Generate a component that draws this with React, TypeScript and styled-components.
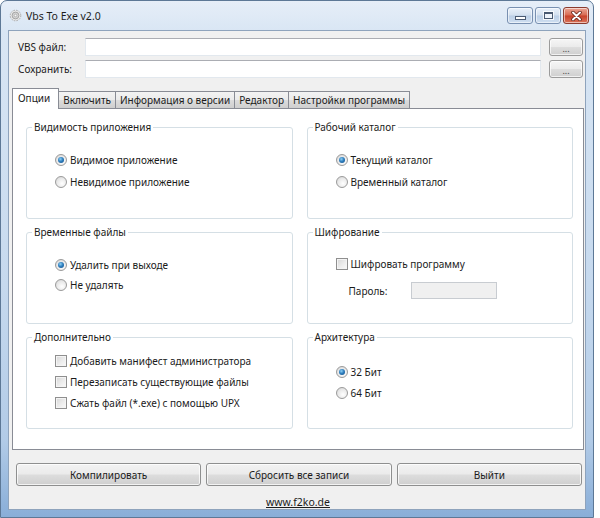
import React, { FC } from 'react'
import styled, { createGlobalStyle, css } from 'styled-components'

const GlobalStyle = createGlobalStyle`
  html, body {
    margin: 0;
    padding: 0;
    background: #ffffff;
  }

  body {
    font-family: 'Noto Sans', 'Open Sans', sans-serif;
    font-size: 10px;
    color: #1b1b1b;
  }
`

const Window = styled.div`
  box-sizing: border-box;
  width: 594px;
  height: 518px;
  padding: 0 7px 7px 7px;
  display: flex;
  flex-direction: column;
  border: 1px solid #5d7896;
  border-radius: 7px 7px 0 0;
  background: linear-gradient(180deg, #e6eef8 0%, #d9e6f4 30px, #c6d9ee 55%, #b2cbe7 85%, #89aed8 100%);
`

const TitleBar = styled.div`
  height: 29px;
  display: flex;
  align-items: center;
  flex-shrink: 0;
`

const AppIcon = styled.svg`
  width: 13px;
  height: 13px;
  margin: 0 4px 0 1px;
`

const Title = styled.span`
  flex: 1;
  font-size: 10.5px;
  color: #1e1e1e;
  padding-top: 1px;
`

const CaptionButtons = styled.div`
  display: flex;
  gap: 2px;
  align-self: flex-start;
  margin-top: 6px;
  margin-right: -3px;
`

const CaptionButton = styled.div<{ $close?: boolean }>`
  box-sizing: border-box;
  width: 26px;
  height: 17px;
  border: 1px solid #7890b1;
  border-radius: 3px;
  display: flex;
  align-items: center;
  justify-content: center;
  box-shadow: inset 0 0 0 1px rgba(255, 255, 255, 0.55);
  background: linear-gradient(180deg, #eaf1fa 0%, #d3e0ef 48%, #bccfe6 52%, #cfdff1 100%);

  ${({ $close }) =>
    $close &&
    css`
      border-color: #8a3b2f;
      background: linear-gradient(180deg, #eba796 0%, #d96a52 48%, #c8412a 52%, #d9735a 100%);
    `}
`

const MinGlyph = styled.span`
  width: 9px;
  height: 2px;
  margin-top: 5px;
  background: #ffffff;
  border: 1px solid #4a5a72;
`

const MaxGlyph = styled.span`
  box-sizing: border-box;
  width: 9px;
  height: 7px;
  border: 1px solid #4a5a72;
  border-top-width: 2px;
  background: #eef3fa;
  outline: 1px solid rgba(255, 255, 255, 0.8);
`

const Client = styled.div`
  flex: 1;
  display: flex;
  flex-direction: column;
  padding: 7px 1px 0 3px;
  background: #f0f0f0;
  border: 1px solid #8ea3bc;
`

const FileRows = styled.div`
  display: flex;
  flex-direction: column;
  gap: 4px;
  padding: 0 1px 0 6px;
`

const FileRow = styled.div`
  display: flex;
  align-items: center;
  height: 18px;
`

const FieldLabel = styled.span`
  width: 67px;
  flex-shrink: 0;
`

const TextBox = styled.div<{ $disabled?: boolean }>`
  box-sizing: border-box;
  flex: 1;
  height: 18px;
  border: 1px solid #e2e8ee;
  border-top-color: #abadb3;
  background: #ffffff;

  ${({ $disabled }) =>
    $disabled &&
    css`
      flex: none;
      width: 86px;
      height: 17px;
      background: #f0f0f0;
      border-color: #c8ccd1;
    `}
`

const BrowseButton = styled.div`
  box-sizing: border-box;
  width: 34px;
  height: 18px;
  margin-left: 8px;
  border: 1px solid #9b9b9b;
  border-radius: 3px;
  background: linear-gradient(180deg, #f6f6f6 0%, #ebebeb 48%, #dddddd 52%, #cfcfcf 100%);
  box-shadow: inset 0 0 0 1px rgba(255, 255, 255, 0.7);
  display: flex;
  align-items: flex-end;
  justify-content: center;
  font-size: 9px;
  line-height: 12px;
  color: #444;
`

const Tabs = styled.div`
  margin-top: 11px;
  display: flex;
  flex-direction: column;
`

const TabStrip = styled.div`
  height: 19px;
  display: flex;
  align-items: flex-end;
  position: relative;
  z-index: 1;
`

const Tab = styled.div<{ $active?: boolean }>`
  box-sizing: border-box;
  height: 17px;
  padding: 0 4px;
  display: flex;
  align-items: center;
  border: 1px solid #898c95;
  border-bottom: none;
  margin-right: -1px;
  background: linear-gradient(180deg, #f3f3f3 0%, #ebebeb 50%, #dddddd 50%, #cfcfcf 100%);
  white-space: nowrap;

  ${({ $active }) =>
    $active &&
    css`
      height: 21px;
      margin-bottom: -1px;
      padding: 0 8px 3px 5px;
      background: #ffffff;
    `}
`

const TabPage = styled.div`
  box-sizing: border-box;
  height: 342px;
  padding: 10px 10px 0 13px;
  border: 1px solid #898c95;
  background: #ffffff;
  display: grid;
  grid-template-columns: 1fr 1fr;
  grid-auto-rows: 100px;
  column-gap: 14px;
  row-gap: 5px;
`

const Group = styled.fieldset`
  margin: 0;
  padding: 0;
  min-inline-size: 0;
  border: 1px solid #d5dfe5;
  border-radius: 3px;
`

const Legend = styled.legend`
  margin-left: 5px;
  padding: 0 2px;
  line-height: 16px;
`

const Options = styled.div<{ $top: number; $row: number }>`
  display: flex;
  flex-direction: column;
  padding: ${({ $top }) => $top}px 0 0 28px;

  & > * {
    height: ${({ $row }) => $row}px;
  }
`

const Option = styled.label`
  display: flex;
  align-items: center;
  gap: 3px;
`

const RadioMark = styled.span<{ $checked?: boolean }>`
  box-sizing: border-box;
  width: 12px;
  height: 12px;
  border-radius: 50%;
  border: 1px solid #9a9a9a;
  background: radial-gradient(circle at 60% 65%, #ffffff 0%, #e9e9e9 55%, #cfcfcf 100%);
  display: flex;
  align-items: center;
  justify-content: center;

  ${({ $checked }) =>
    $checked &&
    css`
      &::after {
        content: '';
        width: 6px;
        height: 6px;
        border-radius: 50%;
        background: radial-gradient(circle at 40% 35%, #8ed0f5 0%, #2f7fbe 45%, #0f4a85 100%);
      }
    `}
`

const CheckMark = styled.span`
  box-sizing: border-box;
  width: 12px;
  height: 12px;
  border: 1px solid #8f8f8f;
  background: linear-gradient(135deg, #d6d6d6 0%, #ececec 55%, #fafafa 100%);
  box-shadow: inset 0 0 0 1px #f4f4f4;
`

const PasswordRow = styled.div`
  display: flex;
  align-items: center;
  margin-top: 8px;
  padding-left: 41px;
`

const PasswordLabel = styled.span`
  width: 62px;
`

const ActionBar = styled.div`
  margin-top: 13px;
  padding: 0 2px 0 4px;
  display: grid;
  grid-template-columns: repeat(3, 1fr);
  gap: 5px;
`

const ActionButton = styled.div`
  box-sizing: border-box;
  height: 23px;
  border: 1px solid #8e8f8f;
  border-radius: 3px;
  background: linear-gradient(180deg, #f2f2f2 0%, #ebebeb 48%, #dddddd 52%, #cfcfcf 100%);
  box-shadow: inset 0 0 0 1px rgba(255, 255, 255, 0.75);
  display: flex;
  align-items: center;
  justify-content: center;
`

const SiteLink = styled.a`
  align-self: center;
  margin-top: 9px;
  font-size: 10.5px;
  color: #1b1b1b;
  text-decoration: underline;
`

interface ChoiceProps {
  checked?: boolean
}

const Radio: FC<React.PropsWithChildren<ChoiceProps>> = ({ checked, children }) => (
  <Option>
    <RadioMark $checked={checked} />
    {children}
  </Option>
)

const Check: FC<React.PropsWithChildren> = ({ children }) => (
  <Option>
    <CheckMark />
    {children}
  </Option>
)

const tabs = ['Опции', 'Включить', 'Информация о версии', 'Редактор', 'Настройки программы']

const App: FC = () => (
  <>
    <GlobalStyle />
    <Window>
      <TitleBar>
        <AppIcon viewBox="0 0 16 16">
          <circle cx="8" cy="8" r="6.5" fill="#e8e8e8" stroke="#9a9a9a" strokeWidth="1" strokeDasharray="2 1.4" />
          <circle cx="8" cy="8" r="4.2" fill="#d4d4d4" stroke="#8a8a8a" strokeWidth="0.8" />
          <circle cx="8" cy="8" r="1.6" fill="#f7f7f7" stroke="#8a8a8a" strokeWidth="0.6" />
        </AppIcon>
        <Title>Vbs To Exe v2.0</Title>
        <CaptionButtons>
          <CaptionButton>
            <MinGlyph />
          </CaptionButton>
          <CaptionButton>
            <MaxGlyph />
          </CaptionButton>
          <CaptionButton $close>
            <svg width="11" height="10" viewBox="0 0 11 10">
              <path d="M2 1.5 L9 8.5 M9 1.5 L2 8.5" stroke="#5a1a10" strokeWidth="3.4" strokeLinecap="round" />
              <path d="M2 1.5 L9 8.5 M9 1.5 L2 8.5" stroke="#ffffff" strokeWidth="2" strokeLinecap="round" />
            </svg>
          </CaptionButton>
        </CaptionButtons>
      </TitleBar>

      <Client>
        <FileRows>
          <FileRow>
            <FieldLabel>VBS файл:</FieldLabel>
            <TextBox />
            <BrowseButton>...</BrowseButton>
          </FileRow>
          <FileRow>
            <FieldLabel>Сохранить:</FieldLabel>
            <TextBox />
            <BrowseButton>...</BrowseButton>
          </FileRow>
        </FileRows>

        <Tabs>
          <TabStrip>
            {tabs.map((t, i) => (
              <Tab key={t} $active={i === 0}>
                {t}
              </Tab>
            ))}
          </TabStrip>
          <TabPage>
            <Group>
              <Legend>Видимость приложения</Legend>
              <Options $top={14} $row={22}>
                <Radio checked>Видимое приложение</Radio>
                <Radio>Невидимое приложение</Radio>
              </Options>
            </Group>
            <Group>
              <Legend>Рабочий каталог</Legend>
              <Options $top={14} $row={22}>
                <Radio checked>Текущий каталог</Radio>
                <Radio>Временный каталог</Radio>
              </Options>
            </Group>
            <Group>
              <Legend>Временные файлы</Legend>
              <Options $top={15} $row={20}>
                <Radio checked>Удалить при выходе</Radio>
                <Radio>Не удалять</Radio>
              </Options>
            </Group>
            <Group>
              <Legend>Шифрование</Legend>
              <Options $top={14} $row={20}>
                <Check>Шифровать программу</Check>
              </Options>
              <PasswordRow>
                <PasswordLabel>Пароль:</PasswordLabel>
                <TextBox $disabled />
              </PasswordRow>
            </Group>
            <Group>
              <Legend>Дополнительно</Legend>
              <Options $top={5} $row={21}>
                <Check>Добавить манифест администратора</Check>
                <Check>Перезаписать существующие файлы</Check>
                <Check>Сжать файл (*.exe) с помощью UPX</Check>
              </Options>
            </Group>
            <Group>
              <Legend>Архитектура</Legend>
              <Options $top={16} $row={21}>
                <Radio checked>32 Бит</Radio>
                <Radio>64 Бит</Radio>
              </Options>
            </Group>
          </TabPage>
        </Tabs>

        <ActionBar>
          <ActionButton>Компилировать</ActionButton>
          <ActionButton>Сбросить все записи</ActionButton>
          <ActionButton>Выйти</ActionButton>
        </ActionBar>

        <SiteLink href="#">www.f2ko.de</SiteLink>
      </Client>
    </Window>
  </>
)

export default App
